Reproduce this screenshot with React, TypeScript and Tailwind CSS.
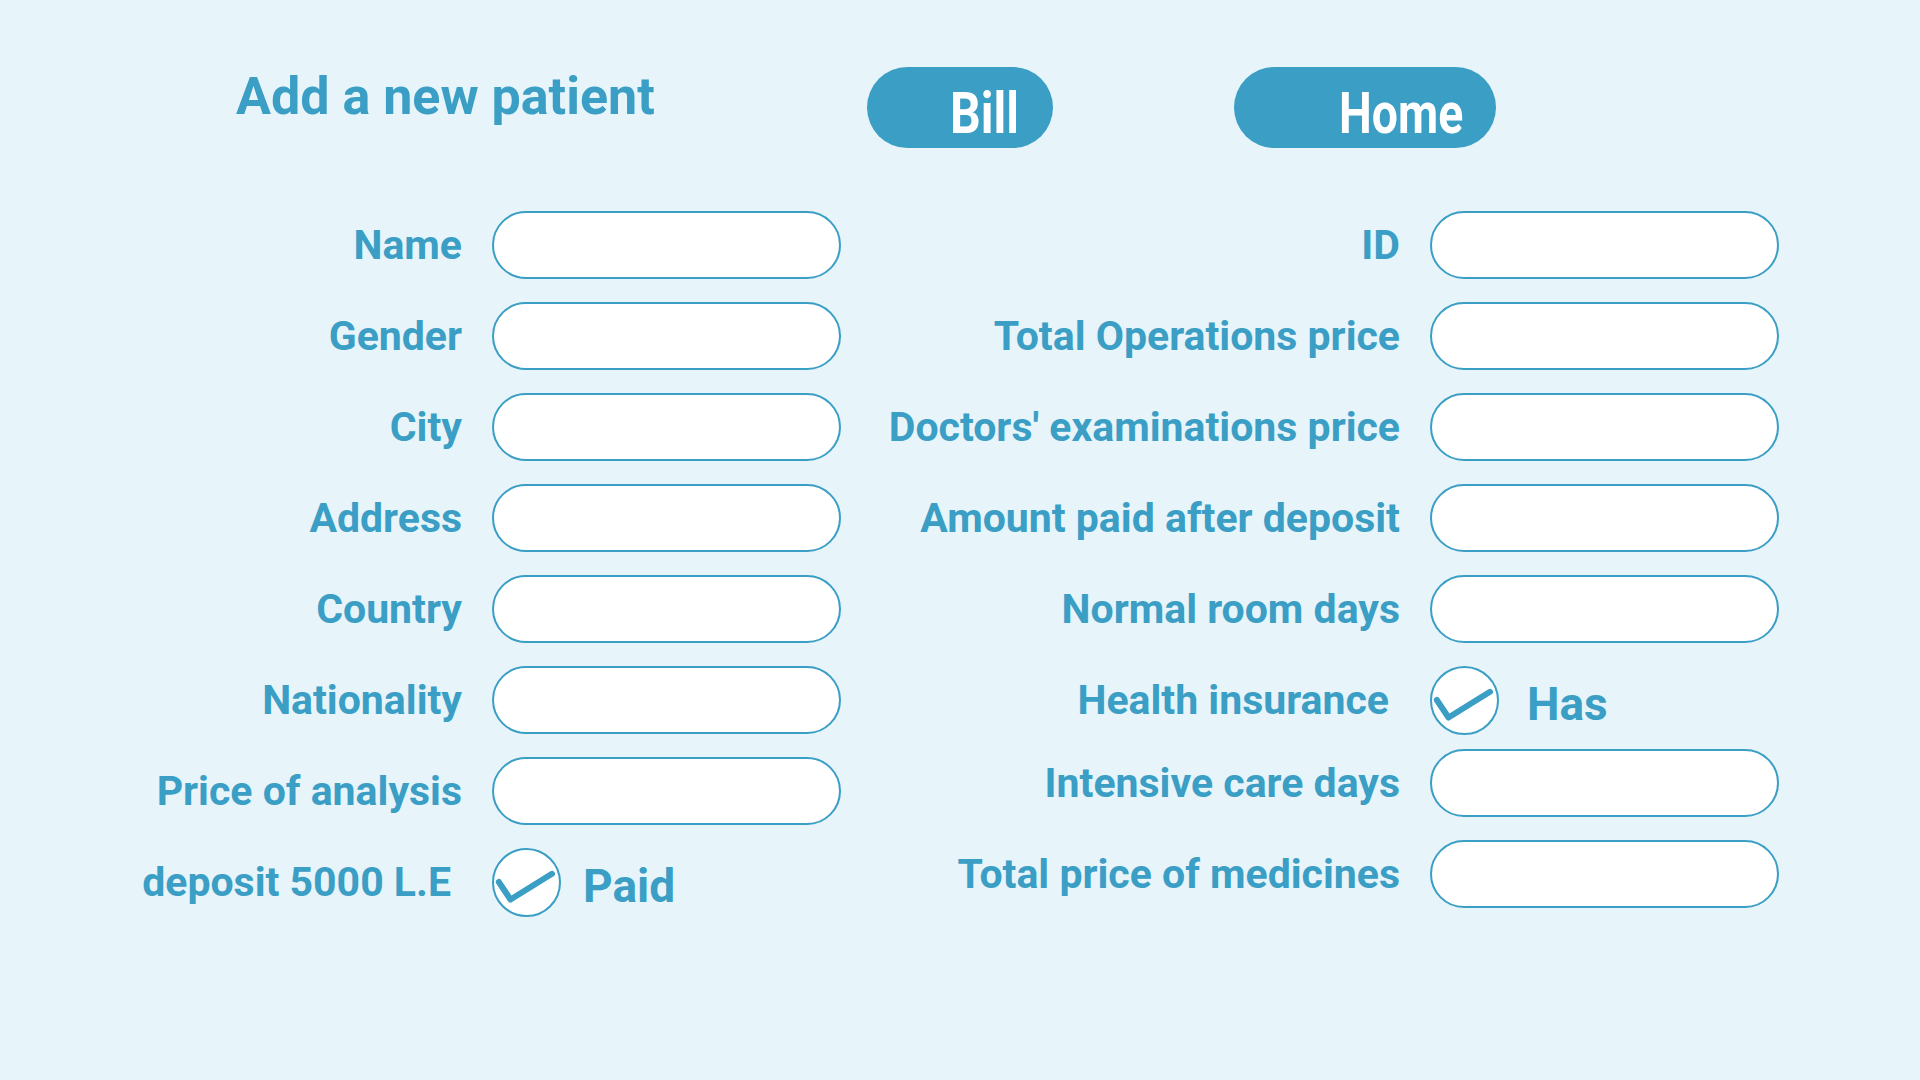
import React from 'react'

const blue = 'text-[#3a9ec5]'

const Field = ({ label, labelW }: { label: string; labelW: string }) => {
  return (
    <div className='flex items-center gap-[30px]'>
      <span className={`${labelW} text-right text-[41px] font-bold leading-none ${blue} whitespace-nowrap`}>{label}</span>
      <input type='text' className='h-[68px] w-[349px] rounded-full border-2 border-[#3a9ec5] bg-white px-6 outline-none' />
    </div>
  )
}

const CheckCircle = () => {
  return (
    <div className='h-[69px] w-[69px] shrink-0 rounded-full border-2 border-[#3a9ec5] bg-white'>
      <svg viewBox='0 0 65 65' className='h-full w-full'>
        <polyline points='4.8,32 16.5,49.5 58,23.8' fill='none' stroke='#3a9ec5' strokeWidth='6' strokeLinecap='round' strokeLinejoin='round' />
      </svg>
    </div>
  )
}

const CheckRow = ({ label, labelW, value, gap }: { label: string; labelW: string; value: string; gap: string }) => {
  return (
    <div className='flex items-center gap-[30px]'>
      <span className={`${labelW} pr-[11px] text-right text-[41px] font-bold leading-none ${blue} whitespace-nowrap`}>{label}</span>
      <div className='flex items-center'>
        <CheckCircle />
        <span className={`${gap} pt-[6px] text-[46px] font-bold leading-none ${blue}`}>{value}</span>
      </div>
    </div>
  )
}

const App = () => {
  return (
    <div className="min-h-screen w-full bg-[#e7f4fa] font-['Roboto',sans-serif]">
      {/* header */}
      <div className='flex items-start pl-[236px] pt-[67px]'>
        <h1 className={`mt-[4px] w-[631px] text-[52px] font-bold leading-none ${blue}`}>Add a new patient</h1>
        <button className='flex h-[81px] w-[186px] justify-end rounded-full bg-[#3a9ec5] pr-[34px] pt-[17px]'>
          <span className='inline-block origin-right scale-x-[0.83] text-[58px] font-bold leading-none text-white'>Bill</span>
        </button>
        <button className='ml-[181px] flex h-[81px] w-[262px] justify-end rounded-full bg-[#3a9ec5] pr-[33px] pt-[17px]'>
          <span className='inline-block origin-right scale-x-[0.8] text-[58px] font-bold leading-none text-white'>Home</span>
        </button>
      </div>

      {/* form */}
      <div className='mt-[63px] flex gap-[39px] pl-[100px]'>
        <div className='flex flex-col gap-[23px]'>
          <Field label='Name' labelW='w-[362px]' />
          <Field label='Gender' labelW='w-[362px]' />
          <Field label='City' labelW='w-[362px]' />
          <Field label='Address' labelW='w-[362px]' />
          <Field label='Country' labelW='w-[362px]' />
          <Field label='Nationality' labelW='w-[362px]' />
          <Field label='Price of analysis' labelW='w-[362px]' />
          <CheckRow label='deposit 5000 L.E' labelW='w-[362px]' value='Paid' gap='ml-[22px]' />
        </div>
        <div className='flex flex-col gap-[23px]'>
          <Field label='ID' labelW='w-[520px]' />
          <Field label='Total Operations price' labelW='w-[520px]' />
          <Field label="Doctors' examinations price" labelW='w-[520px]' />
          <Field label='Amount paid after deposit' labelW='w-[520px]' />
          <Field label='Normal room days' labelW='w-[520px]' />
          <CheckRow label='Health insurance' labelW='w-[520px]' value='Has' gap='ml-[28px]' />
          <div className='-mt-[9px]'>
            <Field label='Intensive care days' labelW='w-[520px]' />
          </div>
          <Field label='Total price of medicines' labelW='w-[520px]' />
        </div>
      </div>
    </div>
  )
}

export default App
